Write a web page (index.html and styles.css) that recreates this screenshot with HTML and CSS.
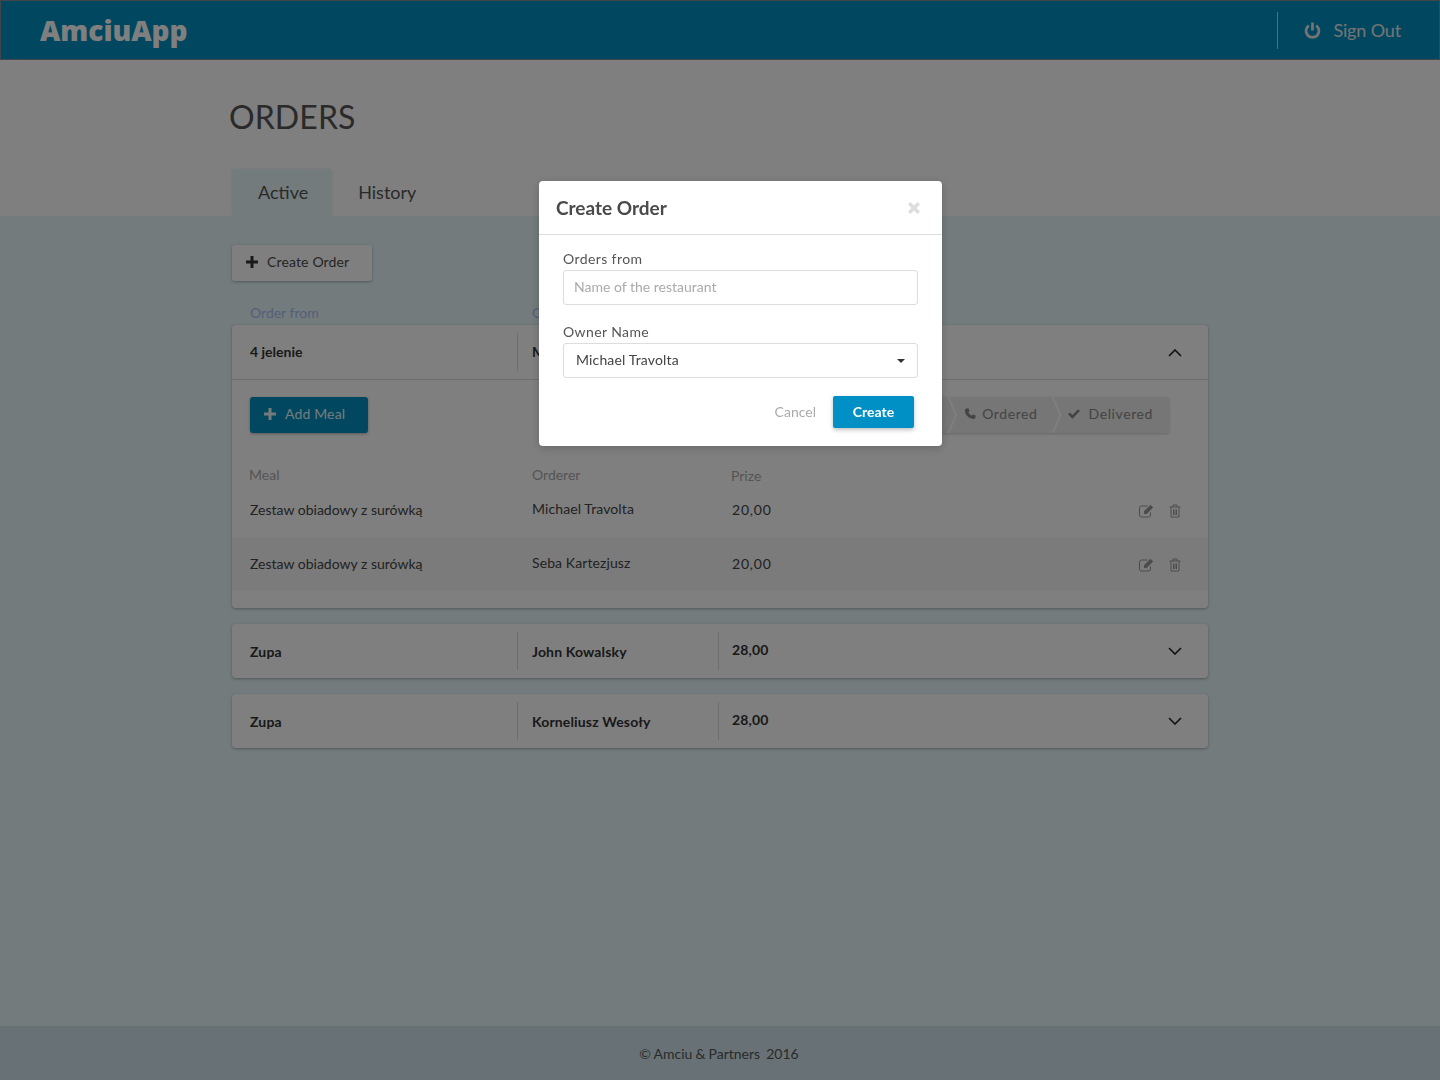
FILE: index.html
```html
<!DOCTYPE html>
<html>
<head>
  <meta charset="UTF-8">
  <title>AmciuApp - Orders</title>
  <link rel="stylesheet" href="styles.css">
</head>
<body>
  <header class="topbar">
    <div class="logo">AmciuApp</div>
    <a class="signout" href="#">
      <svg class="power" viewBox="0 0 16 16" width="17" height="17"><path d="M4.600 3.400a6.100 6.100 0 1 0 6.800 0" fill="none" stroke="currentColor" stroke-width="2.600"/><path d="M8 .5v7.500" fill="none" stroke="currentColor" stroke-width="2.600"/></svg>
      Sign Out
    </a>
  </header>

  <section class="page-head">
    <h1>ORDERS</h1>
    <nav class="tabs">
      <a class="tab active" href="#">Active</a>
      <a class="tab" href="#">History</a>
    </nav>
  </section>

  <main class="content">
    <button class="btn btn-white">
      <svg class="plus" viewBox="0 0 12 12" width="12" height="12"><path d="M4.5 0h3v4.5H12v3H7.5V12h-3V7.5H0v-3h4.5z" fill="currentColor"/></svg>
      Create Order
    </button>

    <div class="col-labels">
      <span>Order from</span>
      <span>Owner</span>
    </div>

    <article class="card">
      <div class="card-head open">
        <div class="cell">4 jelenie</div>
        <div class="cell">Michael Travolta</div>
        <div class="cell">40,00</div>
        <svg class="chevron" viewBox="0 0 14 8" width="14" height="8"><path d="M1 7l6-6 6 6" fill="none" stroke="currentColor" stroke-width="1.6"/></svg>
      </div>
      <div class="card-body">
        <div class="actions">
          <button class="btn btn-blue">
            <svg class="plus" viewBox="0 0 12 12" width="12" height="12"><path d="M4.5 0h3v4.5H12v3H7.5V12h-3V7.5H0v-3h4.5z" fill="currentColor"/></svg>
            Add Meal
          </button>
          <div class="steps">
            <div class="step step-first"></div>
            <div class="step">
              <svg viewBox="0 0 12 12" width="12" height="12"><path d="M2.6.6L4.4.2l1.2 2.9-1.3 1.2c.6 1.4 1.9 2.7 3.4 3.4l1.2-1.3 2.9 1.2-.4 1.8c-.2.9-1.1 1.6-2 1.5C4.6 10.600 1.300 7.300.9 2.600.8 1.700 1.600.800 2.600.6z" fill="currentColor"/></svg>
              Ordered
            </div>
            <div class="step">
              <svg class="check" viewBox="0 0 14 12" width="14" height="12"><path d="M1 6.300l1.900-1.900 2.500 2.500L11.100 1.200 13 3.100 5.400 10.700z" fill="currentColor"/></svg>
              Delivered
            </div>
          </div>
        </div>

        <div class="meal-labels">
          <span>Meal</span>
          <span>Orderer</span>
          <span>Prize</span>
        </div>

        <div class="meal">
          <span>Zestaw obiadowy z surówką</span>
          <span class="orderer">Michael Travolta</span>
          <span class="prize">20,00</span>
          <span class="tools">
            <svg viewBox="0 0 16 14" width="16" height="14"><path d="M11.500 8.500v2.500a2 2 0 0 1-2 2h-7a2 2 0 0 1-2-2V4a2 2 0 0 1 2-2h6" fill="none" stroke="currentColor"/><path d="M5 7.300L11.500.800l2.700 2.700L7.700 10H5z" fill="currentColor"/></svg>
            <svg viewBox="0 0 12 14" width="12" height="14"><path d="M.5 3h11M4 3V1h4v2M2 3v10h8V3M4.500 5.500v5.500M6 5.500v5.500M7.500 5.500v5.500" fill="none" stroke="currentColor"/></svg>
          </span>
        </div>
        <div class="meal striped">
          <span>Zestaw obiadowy z surówką</span>
          <span class="orderer">Seba Kartezjusz</span>
          <span class="prize">20,00</span>
          <span class="tools">
            <svg viewBox="0 0 16 14" width="16" height="14"><path d="M11.500 8.500v2.500a2 2 0 0 1-2 2h-7a2 2 0 0 1-2-2V4a2 2 0 0 1 2-2h6" fill="none" stroke="currentColor"/><path d="M5 7.300L11.500.800l2.700 2.700L7.700 10H5z" fill="currentColor"/></svg>
            <svg viewBox="0 0 12 14" width="12" height="14"><path d="M.5 3h11M4 3V1h4v2M2 3v10h8V3M4.500 5.500v5.500M6 5.500v5.500M7.500 5.500v5.500" fill="none" stroke="currentColor"/></svg>
          </span>
        </div>
      </div>
    </article>

    <article class="card">
      <div class="card-head">
        <div class="cell">Zupa</div>
        <div class="cell">John Kowalsky</div>
        <div class="cell price">28,00</div>
        <svg class="chevron" viewBox="0 0 14 8" width="14" height="8"><path d="M1 1l6 6 6-6" fill="none" stroke="currentColor" stroke-width="1.6"/></svg>
      </div>
    </article>

    <article class="card">
      <div class="card-head">
        <div class="cell">Zupa</div>
        <div class="cell">Korneliusz Wesoły</div>
        <div class="cell price">28,00</div>
        <svg class="chevron" viewBox="0 0 14 8" width="14" height="8"><path d="M1 1l6 6 6-6" fill="none" stroke="currentColor" stroke-width="1.6"/></svg>
      </div>
    </article>
  </main>

  <footer class="footer">© Amciu &amp; Partners&nbsp; 2016</footer>

  <div class="backdrop">
    <form class="modal">
      <div class="modal-head">
        <h2>Create Order</h2>
        <svg class="close" viewBox="0 0 12 12" width="12" height="12"><path d="M1.200 1.200l9.600 9.600M10.800 1.200l-9.600 9.600" fill="none" stroke="currentColor" stroke-width="3.400"/></svg>
      </div>
      <div class="modal-body">
        <label class="field">
          Orders from
          <input type="text" placeholder="Name of the restaurant">
        </label>
        <label class="field">
          Owner Name
          <span class="select">Michael Travolta</span>
        </label>
        <div class="modal-foot">
          <a class="cancel" href="#">Cancel</a>
          <button class="btn-create" type="button">Create</button>
        </div>
      </div>
    </form>
  </div>
</body>
</html>
```

FILE: styles.css
```css
:root {
  --primary: #008fbf;
  --panel: #e6f6fb;
  --text: #4a4a4a;
}

* {
  box-sizing: border-box;
}

body {
  margin: 0;
  min-height: 1080px;
  display: flex;
  flex-direction: column;
  font-family: Lato, sans-serif;
  color: var(--text);
  background-color: white;
}

.topbar {
  height: 60px;
  flex-shrink: 0;
  display: flex;
  align-items: center;
  justify-content: space-between;
  padding-left: 39px;
  background-color: var(--primary);
  border: 1px solid #7f8f96;
}

.logo {
  font-family: "Open Sans", sans-serif;
  font-weight: 800;
  font-size: 28px;
  color: white;
}

.signout {
  height: 37px;
  display: flex;
  align-items: center;
  gap: 12px;
  padding: 0 38px 0 26px;
  border-left: 1px solid #d0d0d0;
  font-size: 18px;
  letter-spacing: -0.15px;
  color: #e8e8e8;
  text-decoration: none;
}

.page-head {
  height: 156px;
  flex-shrink: 0;
  display: flex;
  flex-direction: column;
  justify-content: space-between;
  padding: 37px 232px 0;
}

.page-head h1 {
  margin: 0 0 0 -3px;
  font-size: 32px;
  font-weight: 400;
  line-height: 40px;
  letter-spacing: 0.1px;
  color: #555;
}

.tabs {
  display: flex;
}

.tab {
  height: 47px;
  padding: 0 24px 2px 26px;
  display: flex;
  align-items: center;
  border-radius: 4px 4px 0 0;
  font-size: 18px;
  color: #555;
  text-decoration: none;
}

.tab.active {
  background-color: var(--panel);
  box-shadow: 0 0 3px rgba(0, 0, 0, 0.1);
}

.content {
  flex-grow: 1;
  padding: 29px 232px 0;
  background-color: var(--panel);
}

.btn {
  height: 36px;
  display: flex;
  align-items: center;
  gap: 9px;
  padding: 0 0 3px 14px;
  border: none;
  border-radius: 3px;
  font-family: Lato, sans-serif;
  font-size: 14px;
  letter-spacing: 0.15px;
  box-shadow: 0 1px 3px rgba(0, 0, 0, 0.3);
}

.btn-white {
  width: 140px;
  background-color: white;
  color: var(--text);
}

.btn-blue {
  width: 118px;
  background-color: var(--primary);
  color: #e8f6fb;
}

.plus {
  flex-shrink: 0;
}

.btn-white .plus {
  color: #333;
}

.col-labels {
  height: 44px;
  display: flex;
  align-items: flex-end;
  padding: 0 0 4px 18px;
  font-size: 14px;
  line-height: 17px;
  color: #a8c0f0;
}

.col-labels span {
  width: 282px;
}

.card {
  margin-bottom: 16px;
  background-color: white;
  border-radius: 4px;
  box-shadow: 0 1px 3px rgba(0, 0, 0, 0.3);
}

.card-head {
  height: 54px;
  display: grid;
  grid-template-columns: 285px 201px 1fr auto;
  align-items: center;
  padding-right: 26px;
  font-size: 14px;
  font-weight: 700;
  letter-spacing: 0.15px;
  color: #333;
}

.card-head.open {
  height: 55px;
  border-bottom: 1px solid #ddd;
  letter-spacing: 0;
}

.cell {
  height: 38px;
  line-height: 40px;
  padding-left: 18px;
}

.open .cell {
  line-height: 38px;
}

.cell + .cell {
  padding-left: 14px;
  border-left: 1px solid #ddd;
}

.cell.price {
  line-height: 36px;
  padding-left: 13px;
}

.chevron {
  color: #222;
}

.open .chevron {
  margin-top: 2px;
}

.card-body {
  padding: 17px 0 17px;
}

.actions {
  display: flex;
  justify-content: space-between;
  padding: 0 39px 0 18px;
}

.steps {
  height: 36px;
  display: flex;
  background-color: #ececec;
  border-radius: 3px;
  box-shadow: 0 1px 3px rgba(0, 0, 0, 0.2);
}

.step {
  position: relative;
  display: flex;
  align-items: center;
  gap: 6px;
  padding: 0 16px 3px 13px;
  font-size: 14px;
  letter-spacing: 0.6px;
  color: #888;
}

.step:nth-child(2) {
  padding-right: 18px;
}

.step-first {
  width: 60px;
}

/* chevron between two steps */
.step:not(.step-first)::before {
  content: "";
  position: absolute;
  left: -4px;
  top: 0;
  width: 10px;
  height: 36px;
  background-color: #ffffff;
  clip-path: polygon(0 0, 2px 0, 10px 50%, 2px 100%, 0 100%, 8px 50%);
}

.check {
  margin-left: -2px;
  margin-right: 2px;
}

.meal-labels {
  display: flex;
  padding: 33px 0 0 17px;
  height: 50px;
  font-size: 14px;
  line-height: 17px;
  color: #aaa;
}

.meal-labels span:nth-child(1) {
  width: 283px;
}

.meal-labels span:nth-child(2) {
  width: 199px;
}

.meal-labels span:nth-child(3) {
  margin-top: 1px;
}

.meal {
  height: 54px;
  display: flex;
  align-items: center;
  padding: 0 0 2px 18px;
  font-size: 14px;
  color: #444;
}

.meal.striped {
  background-color: #f7f7f7;
}

.meal span:first-child {
  width: 282px;
}

.orderer {
  width: 200px;
  margin-top: -2px;
  letter-spacing: 0.1px;
}

.prize {
  letter-spacing: 0.8px;
}

.tools {
  margin-left: auto;
  display: flex;
  align-items: center;
  gap: 14px;
  padding: 3px 27px 0 0;
  color: #999;
}

.footer {
  height: 54px;
  flex-shrink: 0;
  display: flex;
  align-items: center;
  justify-content: center;
  padding-right: 2px;
  background-color: #d0e4ec;
  font-size: 14px;
  word-spacing: -0.5px;
  color: #555;
}

.backdrop {
  position: fixed;
  inset: 0;
  padding: 181px 0 0 539px;
  background-color: rgba(0, 0, 0, 0.5);
}

.modal {
  width: 403px;
  height: 265px;
  background-color: white;
  border-radius: 4px;
  box-shadow: 0 2px 10px rgba(0, 0, 0, 0.2);
}

.modal-head {
  height: 54px;
  display: flex;
  align-items: center;
  justify-content: space-between;
  padding: 0 22px 0 17px;
  border-bottom: 1px solid #ddd;
}

.modal-head h2 {
  margin: 0;
  font-size: 19px;
  font-weight: 700;
  color: #4a4a4a;
}

.close {
  color: #ddd;
}

.modal-body {
  padding: 15px 24px 0;
}

.field {
  display: block;
  margin-bottom: 18px;
  font-size: 14px;
  letter-spacing: 0.4px;
  line-height: 17px;
  color: #555;
}

.field input,
.select {
  display: block;
  width: 100%;
  height: 35px;
  margin-top: 3px;
  border: 1px solid #ddd;
  border-radius: 3px;
  font-family: Lato, sans-serif;
  font-size: 14px;
  letter-spacing: 0.15px;
  outline: none;
}

.field input {
  padding: 0 10px 2px;
  letter-spacing: 0;
}

.field input::placeholder {
  color: #aaa;
}

.select {
  position: relative;
  padding: 0 12px;
  line-height: 32px;
  color: #444;
}

.select::after {
  content: "";
  position: absolute;
  right: 12px;
  top: 15px;
  border-style: solid;
  border-width: 4px 4px 0;
  border-color: #333 transparent transparent;
}

.modal-foot {
  display: flex;
  justify-content: flex-end;
  align-items: center;
  gap: 17px;
  padding-right: 4px;
}

.cancel {
  padding-bottom: 2px;
  font-size: 14px;
  color: #aaa;
  text-decoration: none;
}

.btn-create {
  width: 81px;
  height: 32px;
  padding-bottom: 2px;
  border: none;
  border-radius: 2px;
  background-color: #0090c5;
  color: white;
  font-family: Lato, sans-serif;
  font-size: 14px;
  font-weight: 700;
  box-shadow: 0 2px 4px rgba(0, 0, 0, 0.25);
}
```
